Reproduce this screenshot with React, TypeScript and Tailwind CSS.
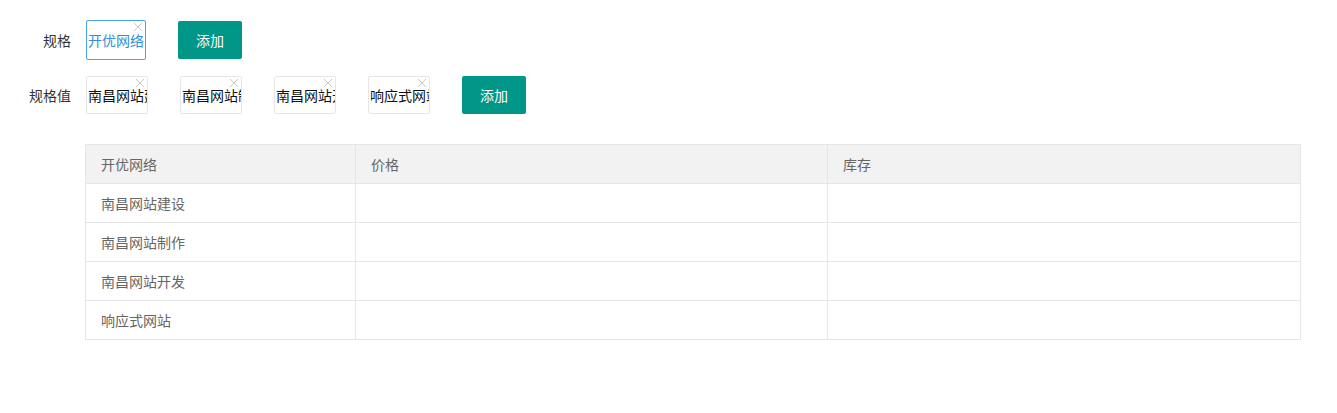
import React from "react";

const font = { fontFamily: '"Noto Sans CJK SC", "Noto Sans", sans-serif' };

const values = ["南昌网站建设", "南昌网站制作", "南昌网站开发", "响应式网站"];

const CloseMark = () => (
  <svg
    className="absolute top-[1px] right-[2px]"
    width="10"
    height="10"
    viewBox="0 0 10 10"
    fill="none"
    stroke="#c8c8c8"
    strokeWidth="1"
  >
    <path d="M1 1 L9 9 M9 1 L1 9" />
  </svg>
);

const AddButton = () => (
  <button className="h-[38px] w-16 rounded-[2px] bg-[#009688] text-[14px] text-white">
    添加
  </button>
);

export default function App() {
  return (
    <div className="min-h-[413px] w-[1337px] bg-white pt-5 text-[14px] text-[#333]" style={font}>
      {/* 规格 */}
      <div className="flex h-10 items-center">
        <label className="w-[71px] text-right">规格</label>
        <div className="relative ml-[15px] flex h-10 w-[60px] items-center overflow-hidden rounded-[2px] border border-[#4aa3ea] px-[1px] text-[#2f8fe0] whitespace-nowrap">
          开优网络
          <CloseMark />
        </div>
        <div className="ml-8">
          <AddButton />
        </div>
      </div>

      {/* 规格值 */}
      <div className="mt-4 flex h-[38px] items-center">
        <label className="w-[71px] text-right">规格值</label>
        <div className="ml-[15px] flex items-center gap-8">
          {values.map((v) => (
            <div
              key={v}
              className="relative flex h-[38px] w-[62px] items-center overflow-hidden rounded-[2px] border border-[#e6e6e6] px-[1px] whitespace-nowrap text-[#111]"
            >
              {v}
              <CloseMark />
            </div>
          ))}
          <AddButton />
        </div>
      </div>

      {/* 表格 */}
      <div className="ml-[85px] mt-[30px] w-[1216px]">
        <table className="w-full border-collapse text-[14px] text-[#666]">
          <colgroup>
            <col className="w-[270px]" />
            <col className="w-[472px]" />
            <col />
          </colgroup>
          <thead>
            <tr className="bg-[#f2f2f2]">
              <th className="h-[39px] border border-[#e6e6e6] px-[15px] text-left font-normal">开优网络</th>
              <th className="border border-[#e6e6e6] px-[15px] text-left font-normal">价格</th>
              <th className="border border-[#e6e6e6] px-[15px] text-left font-normal">库存</th>
            </tr>
          </thead>
          <tbody>
            {values.map((v) => (
              <tr key={v}>
                <td className="h-[39px] border border-[#e6e6e6] px-[15px]">{v}</td>
                <td className="border border-[#e6e6e6] px-[15px]"></td>
                <td className="border border-[#e6e6e6] px-[15px]"></td>
              </tr>
            ))}
          </tbody>
        </table>
      </div>
    </div>
  );
}
